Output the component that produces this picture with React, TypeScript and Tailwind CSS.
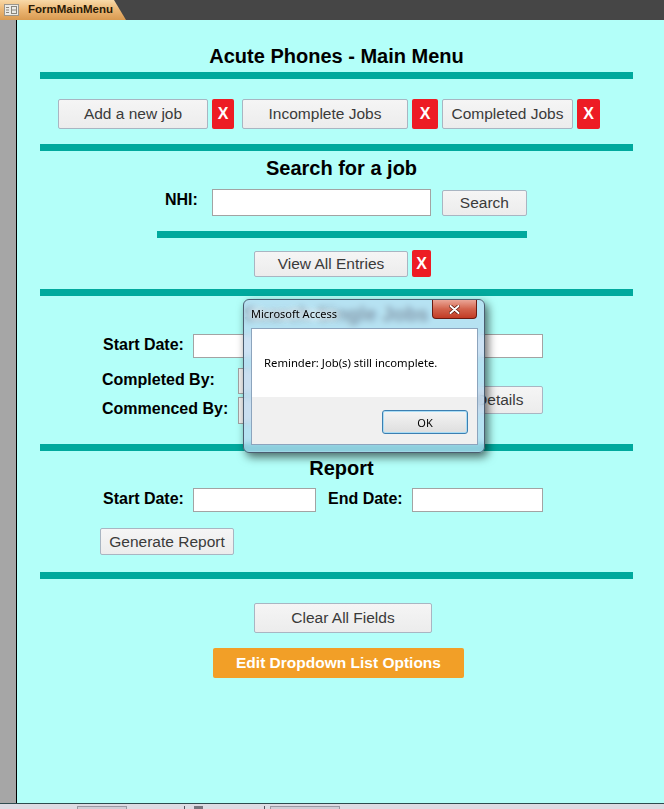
import React from 'react';

const bar = 'h-[7px] shrink-0 bg-[#00a99d]';
const btn =
  'flex shrink-0 items-center justify-center rounded-[2px] border border-[#a9b5c2] bg-gradient-to-b from-[#f5f5f5] to-[#ececec] text-[15.5px] text-[#3a3a3a]';
const xBtn =
  'flex shrink-0 items-center justify-center rounded-[2px] bg-[#ed1c24] text-[16px] font-bold text-white';
const field = 'shrink-0 border border-[#a3a3a3] bg-white';
const label = 'shrink-0 text-[16px] font-bold leading-[19px] text-black';
const heading = 'h-[24px] shrink-0 text-center text-[20px] font-bold leading-[24px] text-black';

function DateRow({ className = '' }: { className?: string }) {
  return (
    <div className={`flex h-[24px] shrink-0 items-start ${className}`}>
      <span className={`${label} ml-[63px] mt-[1px] w-[90px]`}>Start Date:</span>
      <div className={`${field} h-[24px] w-[123px]`} />
      <span className={`${label} ml-[12px] mt-[1px] w-[84px]`}>End Date:</span>
      <div className={`${field} h-[24px] w-[131px]`} />
    </div>
  );
}

function TabIcon() {
  return (
    <svg width="15" height="12" viewBox="0 0 15 12" className="shrink-0">
      <rect x="0.5" y="0.5" width="14" height="11" fill="#ecebe6" stroke="#9a968c" />
      <line x1="2" y1="3.5" x2="5" y2="3.5" stroke="#8a867c" />
      <line x1="2" y1="6" x2="5" y2="6" stroke="#8a867c" />
      <line x1="2" y1="8.5" x2="5" y2="8.5" stroke="#8a867c" />
      <rect x="7.5" y="2.5" width="5" height="7" fill="none" stroke="#8a867c" />
      <line x1="8" y1="6" x2="12" y2="6" stroke="#8a867c" />
    </svg>
  );
}

export default function App() {
  return (
    <div className="relative flex h-[809px] w-[664px] flex-col overflow-hidden bg-[#464646] font-['Liberation_Sans',Arial,sans-serif]">
      {/* Document tab strip */}
      <div className="flex h-[20px] shrink-0">
        <div className="flex h-[20px] w-[126px] items-center gap-[9px] bg-gradient-to-b from-[#f8d9a8] via-[#ebb673] to-[#d99a50] pl-[4px] [clip-path:polygon(0_0,114px_0,126px_100%,0_100%)]">
          <TabIcon />
          <span className="text-[11.5px] font-bold leading-none text-[#2b1a05]">FormMainMenu</span>
        </div>
      </div>

      {/* Form area */}
      <div className="flex flex-1">
        <div className="w-[17px] shrink-0 border-r border-black bg-[#a6a6a6]" />
        <div className="flex-1 bg-[#b3fff9] pl-[23px] pt-[24px]">
          <div className="flex w-[593px] flex-col">
            <div className={`${heading} text-[19.5px]`}>Acute Phones - Main Menu</div>
            <div className={`${bar} mt-[4px]`} />

            <div className="mt-[20px] flex h-[30px] shrink-0 items-stretch">
              <div className={`${btn} ml-[18px] w-[150px]`}>Add a new job</div>
              <div className={`${xBtn} ml-[4px] w-[22px]`}>X</div>
              <div className={`${btn} ml-[8px] w-[166px]`}>Incomplete Jobs</div>
              <div className={`${xBtn} ml-[4px] w-[26px]`}>X</div>
              <div className={`${btn} ml-[4px] w-[131px]`}>Completed Jobs</div>
              <div className={`${xBtn} ml-[4px] w-[23px]`}>X</div>
            </div>

            <div className={`${bar} mt-[15px]`} />
            <div className={`${heading} mt-[5px] pl-[10px]`}>Search for a job</div>

            <div className="mt-[9px] flex h-[27px] shrink-0 items-start">
              <span className={`${label} ml-[125px] mt-[1px]`}>NHI:</span>
              <div className={`${field} ml-[14px] h-[27px] w-[219px]`} />
              <div className={`${btn} ml-[11px] mt-[1px] h-[26px] w-[85px]`}>Search</div>
            </div>

            <div className={`${bar} ml-[117px] mt-[15px] w-[370px]`} />

            <div className="mt-[12px] flex h-[27px] shrink-0 items-end">
              <div className={`${btn} ml-[214px] h-[26px] w-[154px]`}>View All Entries</div>
              <div className={`${xBtn} ml-[4px] h-[27px] w-[19px] text-[14px]`}>X</div>
            </div>

            <div className={`${bar} mt-[12px]`} />
            <div className={`${heading} mt-[6px]`}>Search Single Jobs</div>
            <DateRow className="mt-[8px]" />

            <div className="mt-[10px] flex shrink-0 items-start">
              <div className="flex flex-col">
                <div className="flex h-[26px] items-start">
                  <span className={`${label} ml-[62px] mt-[2px] w-[136px]`}>Completed By:</span>
                  <div className="h-[26px] w-[160px] border border-[#a3a3a3] bg-[#f2f2f2]" />
                </div>
                <div className="mt-[3px] flex h-[27px] items-start">
                  <span className={`${label} ml-[62px] mt-[2px] w-[136px]`}>Commenced By:</span>
                  <div className="h-[27px] w-[160px] border border-[#a3a3a3] bg-[#f2f2f2]" />
                </div>
              </div>
              <div className={`${btn} ml-[21px] mt-[18px] h-[28px] w-[124px]`}>View Details</div>
            </div>

            <div className={`${bar} mt-[20px]`} />
            <div className={`${heading} mt-[5px] pl-[10px]`}>Report</div>
            <DateRow className="mt-[8px]" />

            <div className={`${btn} ml-[60px] mt-[16px] h-[27px] w-[134px]`}>Generate Report</div>
            <div className={`${bar} mt-[17px]`} />
            <div className={`${btn} ml-[214px] mt-[24px] h-[30px] w-[178px]`}>Clear All Fields</div>
            <div className="ml-[173px] mt-[15px] flex h-[30px] w-[251px] shrink-0 items-center justify-center rounded-[2px] bg-[#f29f27] text-[15.5px] font-bold text-white">
              Edit Dropdown List Options
            </div>
          </div>
        </div>
      </div>

      {/* Status strip */}
      <div className="flex h-[6px] shrink-0 items-start border-t border-[#2e4b4f] bg-[#dddbe3] pt-[2px]">
        <div className="ml-[77px] h-[3px] w-[50px] border-l border-r border-t border-[#9a98a2] bg-[#cfcdd6]" />
        <div className="ml-[57px] h-[4px] w-px bg-[#55535c]" />
        <div className="ml-[9px] h-[3px] w-[9px] bg-[#77757e]" />
        <div className="ml-[61px] h-[4px] w-px bg-[#55535c]" />
        <div className="ml-[5px] h-[3px] w-[70px] border-l border-r border-t border-[#9a98a2] bg-[#cfcdd6]" />
      </div>

      {/* Message box */}
      <div className="absolute left-[243px] top-[299px] flex h-[154px] w-[242px] flex-col rounded-[6px] border border-[#4b5d70] bg-[rgba(184,214,240,0.7)] font-['Noto_Sans','Liberation_Sans',sans-serif] text-[11px] leading-[15px] shadow-[3px_4px_10px_rgba(0,0,0,0.6)] backdrop-blur-[3px]">
        <div className="h-[28px] shrink-0 pl-[7px] pt-[6px] leading-[15px]">
          <span className="text-black [text-shadow:0_0_6px_#fff,0_0_8px_#fff,0_0_10px_#fff]">
            Microsoft Access
          </span>
        </div>
        <div className="absolute left-[188px] top-0 flex h-[19px] w-[45px] items-center justify-center rounded-b-[4px] border border-t-0 border-[#6b1a10] bg-gradient-to-b from-[#eaa697] via-[#d2634c] to-[#c23b24]">
          <svg width="11" height="9" viewBox="0 0 11 9">
            <path d="M1.5 1 L9.5 8 M9.5 1 L1.5 8" stroke="#5a1408" strokeWidth="3.4" strokeLinecap="round" />
            <path d="M1.5 1 L9.5 8 M9.5 1 L1.5 8" stroke="#fff" strokeWidth="2" strokeLinecap="round" />
          </svg>
        </div>
        <div className="ml-[7px] flex h-[117px] w-[227px] shrink-0 flex-col border border-[#8ca4bd]">
          <div className="h-[68px] shrink-0 bg-white pl-[12px] pt-[26px] text-[11.3px] leading-[15px] text-black">
            Reminder: Job(s) still incomplete.
          </div>
          <div className="flex flex-1 items-start justify-end bg-[#f0f0f0] pr-[9px] pt-[13px]">
            <div className="flex h-[24px] w-[86px] items-center justify-center rounded-[3px] border border-[#3c7fb1] bg-gradient-to-b from-[#f4f4f4] to-[#dedede] text-black shadow-[inset_0_0_0_1px_#a9dcf5]">
              OK
            </div>
          </div>
        </div>
      </div>
    </div>
  );
}
